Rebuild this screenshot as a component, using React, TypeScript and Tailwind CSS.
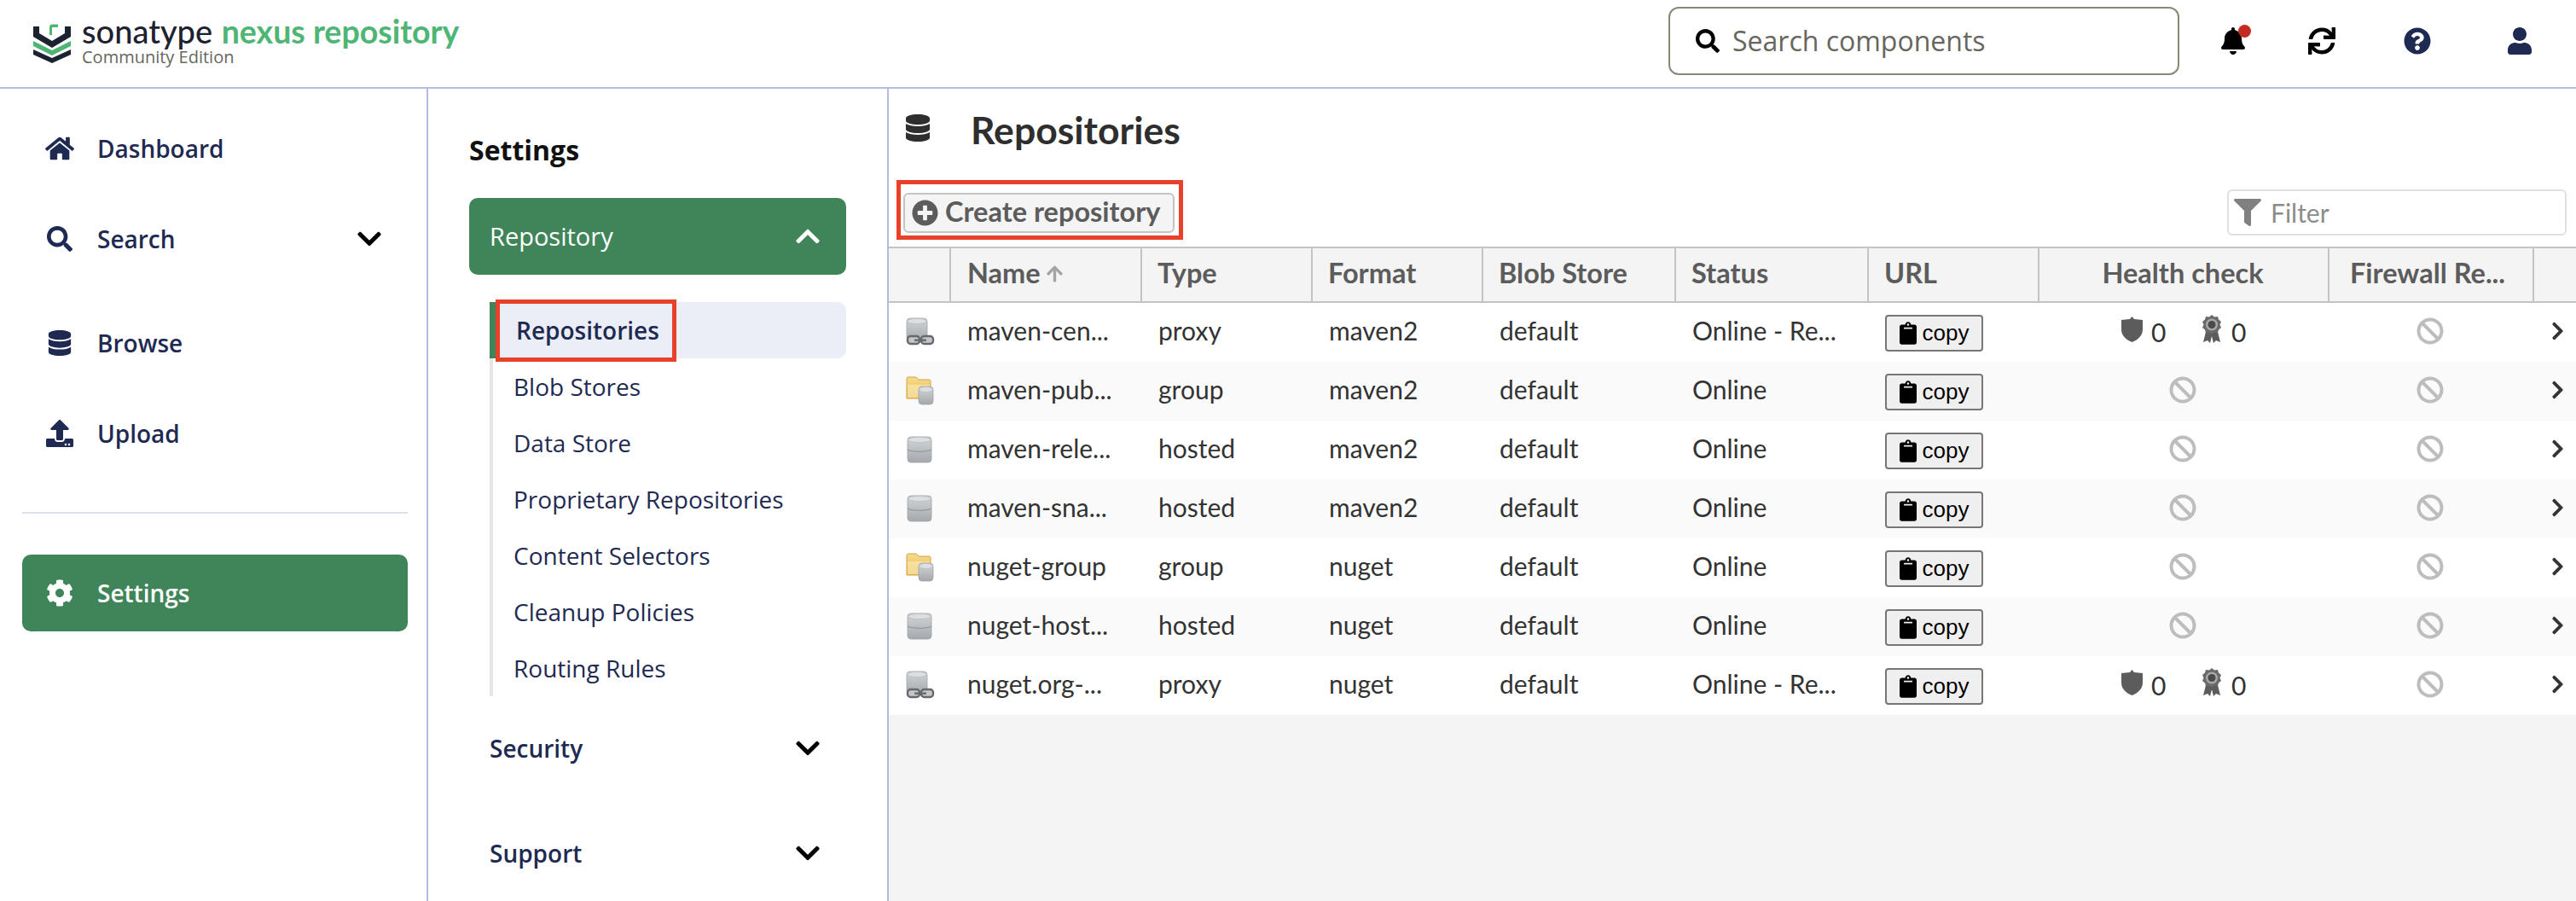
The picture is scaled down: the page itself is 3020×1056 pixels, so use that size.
import {
  FaArrowUp,
  FaBan,
  FaBell,
  FaChevronDown,
  FaChevronRight,
  FaChevronUp,
  FaClipboard,
  FaCog,
  FaDatabase,
  FaFilter,
  FaHome,
  FaPlusCircle,
  FaQuestionCircle,
  FaSearch,
  FaSync,
  FaUpload,
  FaUser,
} from 'react-icons/fa'
import type { ReactNode } from 'react'

const COLS = 'grid grid-cols-[71px_224px_200px_200px_226px_226px_200px_340px_240px_51px]'

type Kind = 'proxy' | 'group' | 'hosted'

const REPOS: { name: string; kind: Kind; format: string; status: string; health: boolean }[] = [
  { name: 'maven-cen...', kind: 'proxy', format: 'maven2', status: 'Online - Re...', health: true },
  { name: 'maven-pub...', kind: 'group', format: 'maven2', status: 'Online', health: false },
  { name: 'maven-rele...', kind: 'hosted', format: 'maven2', status: 'Online', health: false },
  { name: 'maven-sna...', kind: 'hosted', format: 'maven2', status: 'Online', health: false },
  { name: 'nuget-group', kind: 'group', format: 'nuget', status: 'Online', health: false },
  { name: 'nuget-host...', kind: 'hosted', format: 'nuget', status: 'Online', health: false },
  { name: 'nuget.org-...', kind: 'proxy', format: 'nuget', status: 'Online - Re...', health: true },
]

const SUB_ITEMS = ['Blob Stores', 'Data Store', 'Proprietary Repositories', 'Content Selectors', 'Cleanup Policies', 'Routing Rules']

function Logo() {
  return (
    <svg width="44" height="46" viewBox="0 0 44 46" className="shrink-0">
      <path d="M0 3h7v8l15 9 15-9V3h7v12L22 28 0 15z" fill="#1c2230" />
      <path d="M0 20v6l22 11 22-11v-6L22 31z" fill="#4fb575" />
      <path d="M0 30v6l22 10 22-10v-6L22 40z" fill="#1c2230" />
      <path d="M19 13V4c0-2 1-3.500 3.500-3.500H29V4h-6c-.7 0-1 .3-1 1v8z" fill="#4fb575" />
    </svg>
  )
}

function Cylinder({ x, y, w, h }: { x: number; y: number; w: number; h: number }) {
  return (
    <g>
      <rect x={x} y={y} width={w} height={h} rx="4" fill="url(#repoGray)" stroke="#9ea2a6" strokeWidth="0.8" />
      <ellipse cx={x + w / 2} cy={y + 3.5} rx={w / 2 - 0.5} ry="3.2" fill="#dcdfe2" stroke="#abafb3" strokeWidth="0.6" />
    </g>
  )
}

function RepoIcon({ kind }: { kind: Kind }) {
  return (
    <svg width="34" height="34" viewBox="0 0 34 34">
      <defs>
        <linearGradient id="repoGray" x1="0" y1="0" x2="0" y2="1">
          <stop offset="0" stopColor="#d3d6d9" />
          <stop offset="1" stopColor="#a4a8ac" />
        </linearGradient>
        <linearGradient id="repoFolder" x1="0" y1="0" x2="0" y2="1">
          <stop offset="0" stopColor="#f7dc8e" />
          <stop offset="1" stopColor="#e7b653" />
        </linearGradient>
      </defs>
      {kind === 'hosted' && (
        <g>
          <Cylinder x={2} y={2} w={28} h={30} />
          <path d="M2 17c5 3 23 3 28 0" fill="none" stroke="#8b8f93" strokeWidth="1" />
        </g>
      )}
      {kind === 'proxy' && (
        <g>
          <Cylinder x={1} y={1} w={24} h={26} />
          <rect x="2" y="22" width="14" height="9" rx="3.500" fill="#c4c7ca" stroke="#66696d" strokeWidth="2.400" />
          <rect x="18" y="22" width="14" height="9" rx="3.500" fill="#c4c7ca" stroke="#66696d" strokeWidth="2.400" />
          <rect x="10" y="25.500" width="14" height="2.400" fill="#66696d" />
        </g>
      )}
      {kind === 'group' && (
        <g>
          <path d="M1 3c0-1 .5-2 2-2h9l3 3h12c1.500 0 2 1 2 2v20H1z" fill="url(#repoFolder)" stroke="#d2a244" strokeWidth="1" />
          <path d="M2 10h26v15H2z" fill="#f9e6ac" opacity="0.75" />
          <Cylinder x={15} y={12} w={17} h={21} />
        </g>
      )}
    </svg>
  )
}

function ShieldIcon() {
  return (
    <svg width="25" height="30" viewBox="0 0 25 30" className="-mt-[8px] shrink-0">
      <path d="M12.500 0l2.500 3 10 1v11c0 7-5 12-12.500 15C5 27 0 22 0 15V4l10-1z" fill="#5c5c5c" />
    </svg>
  )
}

function AwardIcon() {
  return (
    <svg width="24" height="33" viewBox="0 0 24 33" className="-mt-[8px] shrink-0">
      <path d="M6 16L2 32l5-2 3 3 2-8 2 8 3-3 5 2-4-16z" fill="#5c5c5c" />
      <path d="M12 0l3 2.500 4-.5 1 3.500 3 2.500-1.500 3.500 1.500 3.500-3 2.500-1 3.500-4-.5-3 2.500-3-2.500-4 .5-1-3.500-3-2.500L2.500 11.500 1 8l3-2.500L5 2l4 .5z" fill="#6a6a6a" />
      <circle cx="12" cy="11.500" r="7" fill="#a8a8a8" />
      <circle cx="12" cy="11.500" r="4.500" fill="#4a4a4a" />
    </svg>
  )
}

function CopyButton() {
  return (
    <button className="mt-[2px] flex h-[43px] w-[115px] items-center justify-center gap-[7px] rounded-[4px] border-2 border-[#767676] bg-[#efefef] font-['Liberation_Sans',sans-serif] text-[26px] text-black">
      <FaClipboard className="h-[27px] w-[20px]" />
      copy
    </button>
  )
}

function NavItem({ icon, label, chevron, active }: { icon: ReactNode; label: string; chevron?: boolean; active?: boolean }) {
  return (
    <div
      className={
        active
          ? 'flex h-[90px] items-center rounded-[10px] bg-[#40855a] pl-[26px] pr-[31px] text-white'
          : 'flex h-[90px] items-center rounded-[10px] pl-[26px] pr-[31px] text-[#1f2a52]'
      }
    >
      <span className="flex w-[36px] justify-center text-[34px]">{icon}</span>
      <span className="ml-[26px] flex-1 text-[28px] font-semibold leading-none">{label}</span>
      {chevron && <FaChevronDown className="h-[32px] w-[28px] text-black" />}
    </div>
  )
}

function SectionRow({ label, className }: { label: string; className: string }) {
  return (
    <div className={`flex h-[48px] items-center pl-[24px] pr-[31px] text-[#1f2a52] ${className}`}>
      <span className="flex-1 text-[28px] font-semibold">{label}</span>
      <FaChevronDown className="h-[32px] w-[28px] text-black" />
    </div>
  )
}

export default function App() {
  return (
    <div className="flex h-[1056px] w-[3020px] flex-col overflow-hidden bg-white font-['Open_Sans',sans-serif]">
      {/* top bar */}
      <header className="flex h-[104px] shrink-0 items-center border-b-2 border-[#b4bcdd]">
        <div className="ml-[39px] flex items-center gap-[13px]">
          <Logo />
          <div className="-mt-[9px]">
            <div className="font-['Lato',sans-serif] text-[38px] font-medium leading-[40px]">
              <span className="text-[#1c2230]">sonatype</span>{' '}
              <span className="ml-[1px] text-[37.500px] font-bold text-[#4fb575]">nexus repository</span>
            </div>
            <div className="-mt-[1px] text-[20px] leading-[22px] text-[#66665e]">Community Edition</div>
          </div>
        </div>
        <div className="-mt-[6px] ml-auto flex h-[80px] w-[599px] items-center gap-[15px] rounded-[12px] border-2 border-[#888878] pl-[30px]">
          <FaSearch className="h-[28px] w-[28px] text-black" />
          <span className="text-[32px] text-[#66665e]">Search components</span>
        </div>
        <div className="-mt-[6px] ml-[48px] mr-[52px] flex items-center text-[32px]">
          <div className="relative w-[32px]">
            <FaBell className="h-[32px] w-[30px] text-black" />
            <span className="absolute -top-[3px] right-[-4px] h-[15px] w-[15px] rounded-full bg-[#c42b20]" />
          </div>
          <FaSync className="ml-[71px] h-[32px] w-[32px] text-black" />
          <FaQuestionCircle className="ml-[80px] h-[32px] w-[32px] text-[#1f2a52]" />
          <FaUser className="ml-[90px] h-[32px] w-[28px] text-[#1f2a52]" />
        </div>
      </header>

      <div className="flex min-h-0 flex-1">
        {/* main nav */}
        <nav className="w-[502px] shrink-0 border-r-2 border-[#b4bcdd] pl-[26px] pr-[22px] pt-[25px]">
          <NavItem icon={<FaHome />} label="Dashboard" />
          <div className="mt-[16px]">
            <NavItem icon={<FaSearch className="h-[30px]" />} label="Search" chevron />
          </div>
          <div className="mt-[32px]">
            <NavItem icon={<FaDatabase className="h-[30px]" />} label="Browse" />
          </div>
          <div className="mt-[16px]">
            <NavItem icon={<FaUpload className="h-[32px]" />} label="Upload" />
          </div>
          <div className="mt-[47px] h-[2px] bg-[#dde0ee]" />
          <div className="mt-[48px]">
            <NavItem icon={<FaCog className="h-[32px]" />} label="Settings" active />
          </div>
        </nav>

        {/* settings nav */}
        <aside className="w-[540px] shrink-0 border-r-2 border-[#b4bcdd] pl-[48px] pr-[48px] pt-[49px]">
          <h2 className="text-[32px] font-bold leading-[46px] text-[#111]">Settings</h2>
          <div className="mt-[33px] flex h-[90px] items-center rounded-[10px] bg-[#40855a] pl-[24px] pr-[31px] text-white">
            <span className="flex-1 text-[29px] font-medium">Repository</span>
            <FaChevronUp className="h-[32px] w-[28px]" />
          </div>
          <div className="ml-[24px] mt-[32px] border-l-4 border-[#e6e6e6]">
            <div className="relative -ml-[4px] flex h-[66px] items-center rounded-r-[10px] border-l-[7px] border-[#40855a] bg-[#ebeef7] pl-[24px] text-[28px] font-semibold text-[#1f2a52]">
              Repositories
              <span className="absolute -top-[3px] left-0 h-[73px] w-[212px] border-[5px] border-[#e8402a]" />
            </div>
            {SUB_ITEMS.map((item) => (
              <div key={item} className="flex h-[66px] items-center pl-[24px] text-[28px] text-[#1f2a52]">
                {item}
              </div>
            ))}
          </div>
          <SectionRow label="Security" className="mt-[37px]" />
          <SectionRow label="Support" className="mt-[75px]" />
        </aside>

        {/* content */}
        <main className="flex min-w-0 flex-1 flex-col bg-[#f4f4f4] font-['Lato',sans-serif]">
          <div className="bg-white">
            <div className="flex h-[185px] flex-col">
              <div className="flex items-center pl-[20px] pt-[25px]">
                <FaDatabase className="-mt-[4px] h-[32px] w-[28px] text-[#2e2e2e]" />
                <h1 className="ml-[48px] text-[44.500px] font-bold leading-[46px] text-[#2e2e2e]">Repositories</h1>
              </div>
              <div className="mt-[51px] flex items-start justify-between pl-[17px] pr-[11px]">
                <div className="relative">
                  <button className="flex h-[47px] w-[318px] items-center gap-[8px] rounded-[6px] border-2 border-[#c4c4c4] bg-[#f4f4f4] pl-[8px] text-[32.500px] font-bold text-[#5c5c5c]">
                    <FaPlusCircle className="h-[31px] w-[31px]" />
                    <span className="-mt-[3px]">Create repository</span>
                  </button>
                  <span className="absolute -left-[8px] -top-[15px] h-[70px] w-[336px] border-[5px] border-[#e8402a]" />
                </div>
                <div className="-mt-[4px] flex h-[54px] w-[398px] items-center gap-[11px] rounded-[6px] border-2 border-[#e0e0e0] pl-[6px] text-[30px] text-[#8c8c8c]">
                  <FaFilter className="h-[32px] w-[32px] text-[#808080]" />
                  Filter
                </div>
              </div>
            </div>
            <div className={`${COLS} h-[66px] border-y-2 border-[#c4c4c4] bg-[#f4f4f4] text-[32.500px] font-bold text-[#5c5c5c]`}>
              <div />
              <div className="flex items-center gap-[7px] border-l-2 border-[#c4c4c4] pb-[3px] pl-[19px]">
                Name <FaArrowUp className="h-[22px] w-[19px] text-[#a4a4a4]" />
              </div>
              {['Type', 'Format', 'Blob Store', 'Status', 'URL'].map((h) => (
                <div key={h} className="flex items-center border-l-2 border-[#c4c4c4] pb-[3px] pl-[18px]">
                  {h}
                </div>
              ))}
              <div className="flex items-center justify-center border-l-2 border-[#c4c4c4] pb-[3px] pr-[2px]">Health check</div>
              <div className="flex items-center justify-center border-l-2 border-[#c4c4c4] pb-[3px] pr-[8px]">Firewall Re...</div>
              <div className="border-l-2 border-[#c4c4c4]" />
            </div>
            {REPOS.map((repo, i) => (
              <div
                key={repo.name}
                className={`${COLS} h-[69px] items-center text-[30px] text-[#333] ${i % 2 === 1 ? 'bg-[#fafafa]' : 'bg-white'}`}
              >
                <div className="-mt-[2px] pl-[20px]">
                  <RepoIcon kind={repo.kind} />
                </div>
                <div className="-mt-[4px] pl-[21px]">{repo.name}</div>
                <div className="-mt-[4px] pl-[21px]">{repo.kind}</div>
                <div className="-mt-[4px] pl-[21px]">{repo.format}</div>
                <div className="-mt-[4px] pl-[21px]">default</div>
                <div className="-mt-[4px] pl-[21px]">{repo.status}</div>
                <div className="pl-[21px]">
                  <CopyButton />
                </div>
                {repo.health ? (
                  <div className="flex items-center pl-[98px]">
                    <ShieldIcon />
                    <span className="ml-[10px] w-[59px]">0</span>
                    <AwardIcon />
                    <span className="ml-[11px]">0</span>
                  </div>
                ) : (
                  <div className="-mt-[4px] flex justify-center">
                    <FaBan className="h-[32px] w-[32px] text-[#bdbdbd]" />
                  </div>
                )}
                <div className="-mt-[4px] flex justify-center">
                  <FaBan className="h-[32px] w-[32px] text-[#bdbdbd]" />
                </div>
                <div className="-mt-[4px] flex justify-center pl-[8px]">
                  <FaChevronRight className="h-[24px] w-[15px] text-[#333]" />
                </div>
              </div>
            ))}
          </div>
        </main>
      </div>
    </div>
  )
}
